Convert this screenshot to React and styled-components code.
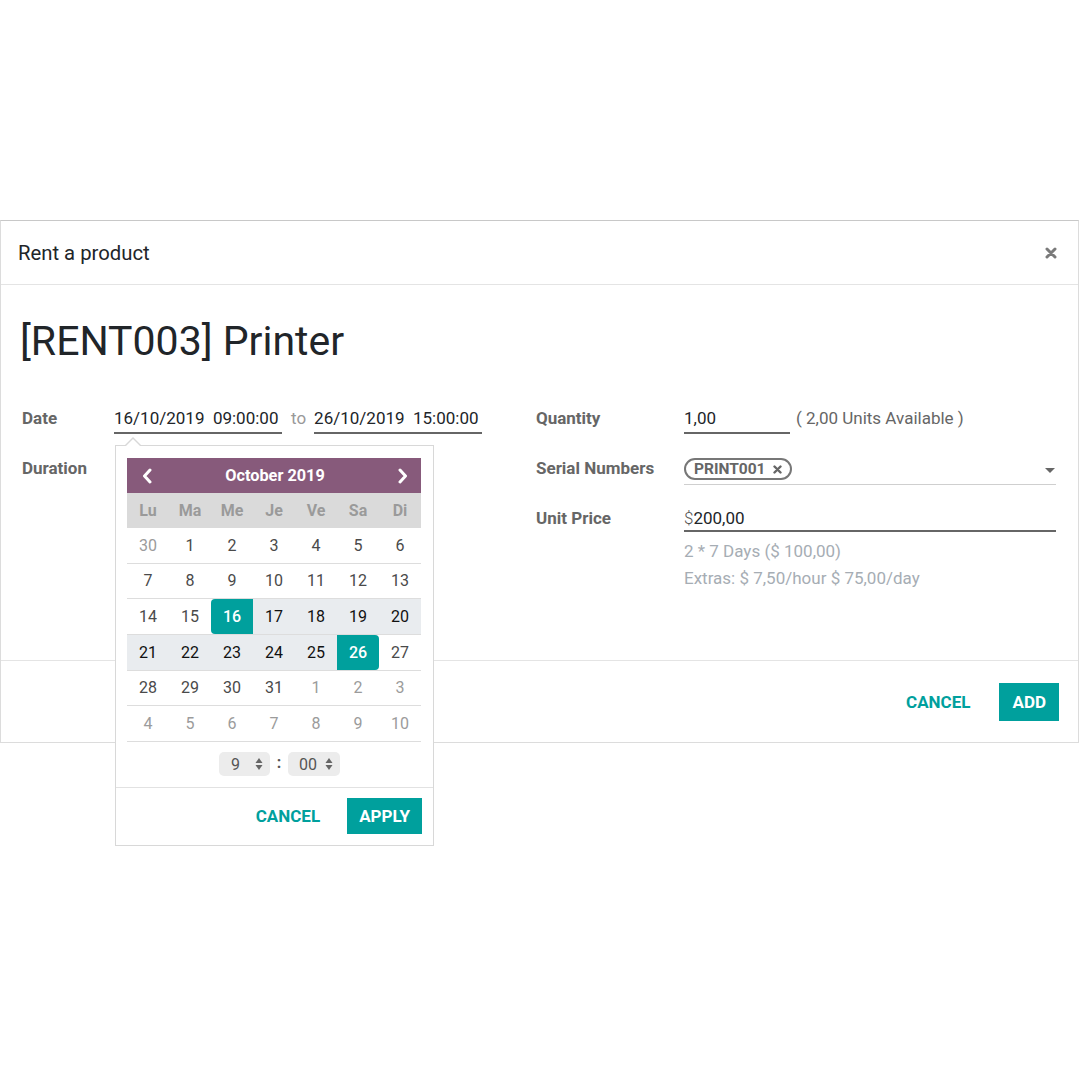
import React from 'react';
import styled, { createGlobalStyle } from 'styled-components';

const TEAL = '#00A09D';
const PURPLE = '#875A7B';

const GlobalStyle = createGlobalStyle`
  html, body { margin: 0; padding: 0; background: #fff; }
  body { font-family: Roboto, "Noto Sans", "Liberation Sans", sans-serif; color: #212529; }
  * { box-sizing: border-box; }
`;

const Page = styled.div`
  width: 1080px;
  height: 1080px;
  padding-top: 220px;
`;

const Dialog = styled.div`
  width: 1079px;
  background: #fff;
  border: 1px solid #dcdcdc;
  border-top-color: #c8c8c8;
`;

const Header = styled.header`
  height: 64px;
  display: flex;
  align-items: center;
  justify-content: space-between;
  padding: 0 21px 0 17px;
  border-bottom: 1px solid #e4e4e4;
`;

const HeaderTitle = styled.h4`
  margin: 0;
  font-size: 20.3px;
  font-weight: 400;
  color: #212529;
`;

const CloseButton = styled.button`
  border: 0;
  background: none;
  padding: 0;
  width: 12px;
  height: 12px;
  display: flex;
  color: #7a7a7a;
`;

const Body = styled.div`
  height: 375px;
  padding: 32px 22px 0 19px;
`;

const Title = styled.h1`
  margin: 0;
  font-size: 41px;
  line-height: 48px;
  font-weight: 400;
  color: #212529;
`;

const Form = styled.div`
  display: grid;
  grid-template-columns: 516px 1fr;
  margin-top: 41px;
`;

const Column = styled.div`
  display: flex;
  flex-direction: column;
`;

const Row = styled.div`
  display: flex;
  align-items: flex-start;
  height: ${(p) => p.$h || 50}px;
`;

const Label = styled.div`
  width: ${(p) => p.$w}px;
  flex: none;
  padding-left: ${(p) => p.$pl || 0}px;
  font-size: 17px;
  line-height: 24px;
  font-weight: 700;
  color: #666;
`;

const DateWrap = styled.div`
  position: relative;
  display: flex;
  align-items: flex-start;
`;

const UnderField = styled.div`
  width: ${(p) => (p.$w ? `${p.$w}px` : 'auto')};
  flex: ${(p) => (p.$w ? 'none' : '1')};
  font-size: 17px;
  line-height: 24px;
  padding-bottom: ${(p) => p.$pb ?? 2}px;
  border-bottom: 2px solid #666;
  color: #212529;
  white-space: pre;
  overflow: hidden;
`;

const To = styled.span`
  font-size: 17px;
  line-height: 24px;
  color: #999;
  margin: 0 8px 0 9px;
`;

const Muted = styled.span`
  font-size: 17px;
  line-height: 24px;
  color: #666;
  margin-left: 6px;
`;

const Currency = styled.span`
  font-weight: 300;
  color: #555;
`;

const SerialField = styled.div`
  flex: 1;
  height: 29px;
  display: flex;
  align-items: flex-start;
  justify-content: space-between;
  padding-top: 2px;
  border-bottom: 1px solid #cfcfcf;
`;

const Tag = styled.span`
  display: inline-flex;
  align-items: center;
  gap: 8px;
  height: 22px;
  padding: 0 8px;
  border: 2px solid #777;
  border-radius: 11px;
  font-size: 15.5px;
  font-weight: 700;
  color: #666;
`;

const Caret = styled.span`
  width: 0;
  height: 0;
  margin: 10px 1px 0 0;
  border-left: 5px solid transparent;
  border-right: 5px solid transparent;
  border-top: 5px solid #666;
`;

const Help = styled.div`
  margin-top: 6px;
  font-size: 17px;
  line-height: 27px;
  color: #a6adb4;
`;

const Footer = styled.footer`
  height: 82px;
  border-top: 1px solid #e4e4e4;
  display: flex;
  align-items: center;
  justify-content: flex-end;
  gap: 29px;
  padding-right: 19px;
`;

const TextButton = styled.button`
  border: 0;
  background: none;
  padding: 0;
  font-family: inherit;
  font-size: 17px;
  font-weight: 700;
  color: ${TEAL};
  text-transform: uppercase;
`;

const PrimaryButton = styled.button`
  border: 0;
  background: ${TEAL};
  color: #fff;
  font-family: inherit;
  font-size: 17px;
  font-weight: 700;
  text-transform: uppercase;
  height: ${(p) => p.$h}px;
  padding: 0 ${(p) => p.$px}px;
`;

/* ---------- date picker popover ---------- */

const Popover = styled.div`
  position: absolute;
  top: calc(100% + 11px);
  left: 1px;
  width: 319px;
  background: #fff;
  border: 1px solid #d8d8d8;
  z-index: 10;

  &::before,
  &::after {
    content: '';
    position: absolute;
    left: 9px;
    border-left: 8px solid transparent;
    border-right: 8px solid transparent;
  }
  &::before {
    top: -9px;
    border-bottom: 8px solid #d8d8d8;
  }
  &::after {
    top: -7px;
    left: 10px;
    border-left-width: 7px;
    border-right-width: 7px;
    border-bottom: 7px solid #fff;
  }
`;

const CalBody = styled.div`
  padding: 12px 12px 0 11px;
`;

const CalHeader = styled.div`
  height: 35px;
  background: ${PURPLE};
  color: #fff;
  display: flex;
  align-items: center;
  justify-content: space-between;
  padding: 0 13px 0 15px;
  font-size: 16.3px;
  font-weight: 700;
`;

const Grid7 = styled.div`
  display: grid;
  grid-template-columns: repeat(7, 42px);
`;

const WeekdayRow = styled(Grid7)`
  height: 35px;
  background: #dadada;
`;

const Weekday = styled.div`
  display: flex;
  align-items: center;
  justify-content: center;
  font-size: 16px;
  font-weight: 700;
  color: #9a9a9a;
`;

const Week = styled(Grid7)`
  border-bottom: 1px solid #ddd;
`;

const Day = styled.div`
  height: 34.67px;
  display: flex;
  align-items: center;
  justify-content: center;
  font-size: 16px;
  color: ${(p) =>
    p.$sel ? '#fff' : p.$range ? '#111' : p.$other ? '#9b9b9b' : '#4a4a4a'};
  background: ${(p) => (p.$sel ? TEAL : p.$range ? '#e9ecef' : 'transparent')};
  font-weight: ${(p) => (p.$sel ? 500 : 400)};
  border-radius: ${(p) =>
    p.$sel === 'start' ? '4px 0 0 4px' : p.$sel === 'end' ? '0 4px 4px 0' : '0'};
`;

const TimeRow = styled.div`
  height: 45px;
  display: flex;
  align-items: center;
  justify-content: center;
  padding-left: 11px;
`;

const TimeSelect = styled.div`
  width: ${(p) => p.$w}px;
  height: 24px;
  border-radius: 5px;
  background: #ececec;
  display: flex;
  align-items: center;
  justify-content: space-between;
  padding: 0 7px 0 ${(p) => p.$pl}px;
  font-size: 16px;
  color: #555;
`;

const Colon = styled.span`
  width: 18px;
  text-align: center;
  font-size: 16px;
  font-weight: 700;
  color: #555;
  margin-top: -3px;
`;

const PopFooter = styled.div`
  border-top: 1px solid #e2e2e2;
  display: flex;
  align-items: center;
  justify-content: flex-end;
  gap: 27px;
  padding: 10px 11px 11px;
`;

const Chevron = ({ dir }) => (
  <svg width="10" height="16" viewBox="0 0 10 16">
    <polyline
      points={dir === 'left' ? '8,2 2.5,8 8,14' : '2,2 7.5,8 2,14'}
      fill="none"
      stroke="#fff"
      strokeWidth="3"
      strokeLinecap="round"
      strokeLinejoin="round"
    />
  </svg>
);

const Cross = ({ size = 12, w = 2.6, color = 'currentColor' }) => (
  <svg width={size} height={size} viewBox="0 0 12 12">
    <path d="M2 2 L10 10 M10 2 L2 10" stroke={color} strokeWidth={w} strokeLinecap="round" />
  </svg>
);

const Spinner = () => (
  <svg width="8" height="14" viewBox="0 0 8 14">
    <path d="M4 1 L7.5 6 H0.5 Z" fill="#666" />
    <path d="M4 13 L7.5 8 H0.5 Z" fill="#666" />
  </svg>
);

const weeks = [
  [[30, 'o'], [1], [2], [3], [4], [5], [6]],
  [[7], [8], [9], [10], [11], [12], [13]],
  [[14], [15], [16, 'start'], [17, 'r'], [18, 'r'], [19, 'r'], [20, 'r']],
  [[21, 'r'], [22, 'r'], [23, 'r'], [24, 'r'], [25, 'r'], [26, 'end'], [27]],
  [[28], [29], [30], [31], [1, 'o'], [2, 'o'], [3, 'o']],
  [[4, 'o'], [5, 'o'], [6, 'o'], [7, 'o'], [8, 'o'], [9, 'o'], [10, 'o']],
];

const weekdays = ['Lu', 'Ma', 'Me', 'Je', 'Ve', 'Sa', 'Di'];

const DatePicker = () => (
  <Popover>
    <CalBody>
      <CalHeader>
        <Chevron dir="left" />
        <span>October 2019</span>
        <Chevron dir="right" />
      </CalHeader>
      <WeekdayRow>
        {weekdays.map((d) => (
          <Weekday key={d}>{d}</Weekday>
        ))}
      </WeekdayRow>
      {weeks.map((w, i) => (
        <Week key={i}>
          {w.map(([n, f], j) => (
            <Day
              key={j}
              $other={f === 'o'}
              $range={f === 'r'}
              $sel={f === 'start' || f === 'end' ? f : undefined}
            >
              {n}
            </Day>
          ))}
        </Week>
      ))}
      <TimeRow>
        <TimeSelect $w={51} $pl={12}>
          <span>9</span>
          <Spinner />
        </TimeSelect>
        <Colon>:</Colon>
        <TimeSelect $w={52} $pl={11}>
          <span>00</span>
          <Spinner />
        </TimeSelect>
      </TimeRow>
    </CalBody>
    <PopFooter>
      <TextButton>Cancel</TextButton>
      <PrimaryButton $h={36} $px={12}>Apply</PrimaryButton>
    </PopFooter>
  </Popover>
);

export default function App() {
  return (
    <Page>
      <GlobalStyle />
      <Dialog>
        <Header>
          <HeaderTitle>Rent a product</HeaderTitle>
          <CloseButton aria-label="Close">
            <Cross size={12} w={3} color="#7a7a7a" />
          </CloseButton>
        </Header>
        <Body>
          <Title>[RENT003] Printer</Title>
          <Form>
            <Column>
              <Row>
                <Label $w={94} $pl={2}>Date</Label>
                <DateWrap>
                  <UnderField $w={168}>16/10/2019  09:00:00</UnderField>
                  <DatePicker />
                </DateWrap>
                <To>to</To>
                <UnderField $w={168}>26/10/2019  15:00:00</UnderField>
              </Row>
              <Row>
                <Label $w={94} $pl={2}>Duration</Label>
              </Row>
            </Column>
            <Column>
              <Row>
                <Label $w={148}>Quantity</Label>
                <UnderField $w={106}>1,00</UnderField>
                <Muted>( 2,00 Units Available )</Muted>
              </Row>
              <Row>
                <Label $w={148}>Serial Numbers</Label>
                <SerialField>
                  <Tag>
                    PRINT001
                    <Cross size={9} w={3.2} color="#666" />
                  </Tag>
                  <Caret />
                </SerialField>
              </Row>
              <Row $h={100}>
                <Label $w={148}>Unit Price</Label>
                <div style={{ flex: 1 }}>
                  <UnderField $pb={0}>
                    <Currency>$</Currency>200,00
                  </UnderField>
                  <Help>
                    2 * 7 Days ($ 100,00)
                    <br />
                    Extras: $ 7,50/hour $ 75,00/day
                  </Help>
                </div>
              </Row>
            </Column>
          </Form>
        </Body>
        <Footer>
          <TextButton>Cancel</TextButton>
          <PrimaryButton $h={38} $px={13}>Add</PrimaryButton>
        </Footer>
      </Dialog>
    </Page>
  );
}
